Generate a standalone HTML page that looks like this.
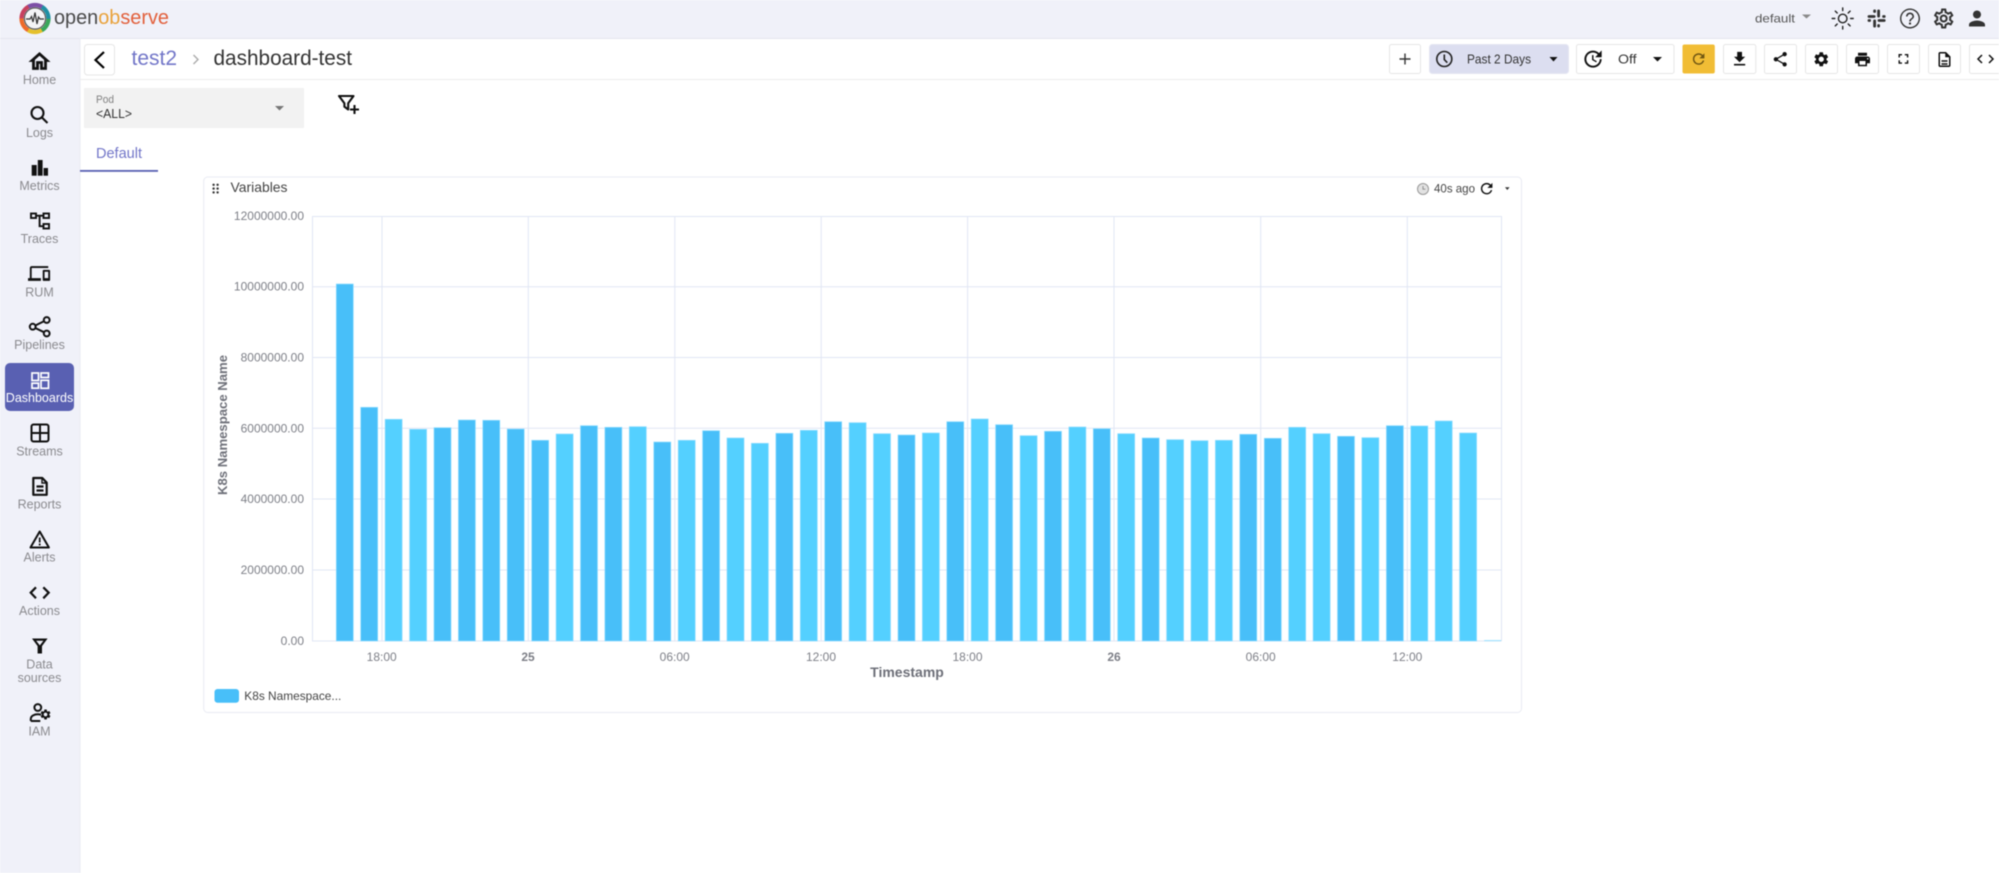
<!DOCTYPE html>
<html lang="en"><head><meta charset="utf-8"><title>dashboard-test</title>
<style>
html,body{margin:0;padding:0;background:#fff;width:1999px;height:873px;overflow:hidden}
svg{display:block;filter:blur(.45px)}
text{font-family:"Liberation Sans",sans-serif}
.nav{font-size:12.5px;fill:#8b8b8f;text-anchor:middle}
.y{font-size:12px;fill:#7d7f87;text-anchor:end}
.x{font-size:12px;fill:#7d7f87;text-anchor:middle}
.b{fill:#fff;stroke:#e6e6e6;stroke-width:1}
.g{stroke:#e1e6f4;stroke-width:1;fill:none}
.ic{fill:none;stroke:#111;stroke-width:2}
</style></head><body>
<svg width="1999" height="873" viewBox="0 0 1999 873" xmlns="http://www.w3.org/2000/svg">
<defs>
<path id="refresh" d="M17.65 6.35A7.958 7.958 0 0 0 12 4c-4.42 0-7.99 3.58-7.99 8s3.57 8 7.99 8c3.73 0 6.84-2.55 7.73-6h-2.08A5.99 5.99 0 0 1 12 18c-3.31 0-6-2.69-6-6s2.69-6 6-6c1.66 0 3.14.69 4.22 1.78L13 11h7V4l-2.35 2.35z"/>
</defs>
<rect width="1999" height="873" fill="#fff"/>
<!-- top bar + sidebar -->
<rect width="1999" height="38" fill="#f0f1f9"/>
<rect y="38" width="80" height="835" fill="#f0f1f9"/>
<line x1="0" y1="38.5" x2="1999" y2="38.5" stroke="#e4e5ee"/>
<line x1="80" y1="38" x2="80" y2="873" stroke="#eaebf3"/>
<!-- logo -->
<g fill="none" stroke-width="4.2">
<circle cx="35" cy="18.5" r="13.5" stroke="#3aa65a" stroke-dasharray="14.4 70.4" stroke-dashoffset="0"/>
<circle cx="35" cy="18.5" r="13.5" stroke="#e5c02b" stroke-dasharray="14.4 70.4" stroke-dashoffset="-14.1"/>
<circle cx="35" cy="18.5" r="13.5" stroke="#ee6a2a" stroke-dasharray="14.4 70.4" stroke-dashoffset="-28.3"/>
<circle cx="35" cy="18.5" r="13.5" stroke="#c7415f" stroke-dasharray="14.4 70.4" stroke-dashoffset="-42.4"/>
<circle cx="35" cy="18.5" r="13.5" stroke="#7d4fa6" stroke-dasharray="14.4 70.4" stroke-dashoffset="-56.5"/>
<circle cx="35" cy="18.5" r="13.5" stroke="#1f8fa3" stroke-dasharray="14.4 70.4" stroke-dashoffset="-70.7"/>
</g>
<circle cx="35" cy="18.5" r="10.6" fill="#f4f4f6" stroke="#555" stroke-width="1.2"/>
<polyline points="26,19 30,19 31.5,16.5 33,22 35,12.5 37,24 38.5,17 40,19 44,19" fill="none" stroke="#333" stroke-width="1.2"/>
<text x="54" y="24" font-size="20" textLength="115" lengthAdjust="spacingAndGlyphs"><tspan fill="#4a4a4a">open</tspan><tspan fill="#e9a23b">ob</tspan><tspan fill="#e2603c">serve</tspan></text>
<!-- top right -->
<text x="1755" y="22.5" font-size="12" fill="#555" textLength="40" lengthAdjust="spacingAndGlyphs">default</text>
<polygon points="1802,14.5 1811,14.5 1806.5,18.5" fill="#8a8a8a"/>
<g transform="translate(1842.7,18.5)" fill="none" stroke="#222" stroke-width="1.4">
<circle r="4.3"/>
<path d="M0-10.5v2.6M0 7.9v2.6M-10.5 0h2.6M7.9 0h2.6M-7.4-7.4l1.9 1.9M5.5 5.5l1.9 1.9M-7.4 7.4l1.9-1.9M5.5-5.5l1.9-1.9" stroke-linecap="round"/>
</g>
<g transform="translate(1876.6,18.5)" fill="#333">
<rect x="-9" y="-3.4" width="8" height="2.8" rx="1.4"/><rect x="-3.4" y="-9" width="2.8" height="3.4" rx="1.2"/>
<rect x=".6" y="-9" width="2.8" height="8" rx="1.4"/><rect x="5.6" y="-3.4" width="3.4" height="2.8" rx="1.2"/>
<rect x="1" y=".6" width="8" height="2.8" rx="1.4"/><rect x=".6" y="5.6" width="2.8" height="3.4" rx="1.2"/>
<rect x="-3.4" y="1" width="2.8" height="8" rx="1.4"/><rect x="-9" y=".6" width="3.4" height="2.8" rx="1.2"/>
</g>
<path transform="translate(1898,6.5)" fill="#333" d="M11 18h2v-2h-2v2zm1-16C6.48 2 2 6.48 2 12s4.48 10 10 10 10-4.48 10-10S17.52 2 12 2zm0 18.6c-4.75 0-8.6-3.85-8.6-8.6S7.25 3.4 12 3.4s8.6 3.85 8.6 8.6-3.85 8.6-8.6 8.6zM12 6c-2.21 0-4 1.79-4 4h1.6c0-1.3 1.1-2.4 2.4-2.4s2.4 1.1 2.4 2.4c0 2-3.2 1.9-3.2 5h1.6c0-2.25 3.2-2.5 3.2-5 0-2.21-1.79-4-4-4z"/>
<path transform="translate(1931.7,6.5)" fill="#333" d="M19.43 12.98c.04-.32.07-.64.07-.98 0-.34-.03-.66-.07-.98l2.11-1.65c.19-.15.24-.42.12-.64l-2-3.46c-.09-.16-.26-.25-.44-.25-.06 0-.12.01-.17.03l-2.49 1c-.52-.4-1.08-.73-1.69-.98l-.38-2.65C14.46 2.18 14.25 2 14 2h-4c-.25 0-.46.18-.49.42l-.38 2.65c-.61.25-1.17.59-1.69.98l-2.49-1c-.06-.02-.12-.03-.18-.03-.17 0-.34.09-.43.25l-2 3.46c-.13.22-.07.49.12.64l2.11 1.65c-.04.32-.07.65-.07.98 0 .33.03.66.07.98l-2.11 1.65c-.19.15-.24.42-.12.64l2 3.46c.09.16.26.25.44.25.06 0 .12-.01.17-.03l2.49-1c.52.4 1.08.73 1.69.98l.38 2.65c.03.24.24.42.49.42h4c.25 0 .46-.18.49-.42l.38-2.65c.61-.25 1.17-.59 1.69-.98l2.49 1c.06.02.12.03.18.03.17 0 .34-.09.43-.25l2-3.46c.12-.22.07-.49-.12-.64l-2.11-1.65zm-1.98-1.71c.04.31.05.52.05.73 0 .21-.02.43-.05.73l-.14 1.13.89.7 1.08.84-.7 1.21-1.27-.51-1.04-.42-.9.68c-.43.32-.84.56-1.25.73l-1.06.43-.16 1.13-.2 1.35h-1.4l-.19-1.35-.16-1.13-1.06-.43c-.43-.18-.83-.41-1.23-.71l-.91-.7-1.06.43-1.27.51-.7-1.21 1.08-.84.89-.7-.14-1.13c-.03-.31-.05-.54-.05-.74s.02-.43.05-.73l.14-1.13-.89-.7-1.08-.84.7-1.21 1.27.51 1.04.42.9-.68c.43-.32.84-.56 1.25-.73l1.06-.43.16-1.13.2-1.35h1.39l.19 1.35.16 1.13 1.06.43c.43.18.83.41 1.23.71l.91.7 1.06-.43 1.27-.51.7 1.21-1.07.85-.89.7.14 1.13zM12 8c-2.21 0-4 1.79-4 4s1.79 4 4 4 4-1.79 4-4-1.79-4-4-4zm0 6c-1.1 0-2-.9-2-2s.9-2 2-2 2 .9 2 2-.9 2-2 2z"/>
<path transform="translate(1965,6.5)" fill="#333" d="M12 12c2.21 0 4-1.79 4-4s-1.79-4-4-4-4 1.79-4 4 1.79 4 4 4zm0 2c-2.67 0-8 1.34-8 4v2h16v-2c0-2.66-5.33-4-8-4z"/>
<!-- sidebar icons -->
<path transform="translate(27.5,49.5)" fill="#111" stroke="#111" stroke-width=".8" d="M12 3L2 12h3v8h6v-6h2v6h6v-8h3L12 3zm5 15h-2v-6H9v6H7v-7.81l5-4.5 5 4.5V18z"/>
<text class="nav" x="39.5" y="84">Home</text>
<g fill="none" stroke="#111" stroke-width="2.1"><circle cx="37.5" cy="113" r="6"/><line x1="41.8" y1="117.4" x2="47.5" y2="123"/></g>
<text class="nav" x="39.5" y="137">Logs</text>
<g fill="#111"><rect x="31.7" y="165" width="5" height="10.7"/><rect x="37.8" y="160" width="4.8" height="15.7"/><rect x="43.6" y="168" width="4.4" height="7.7"/></g>
<text class="nav" x="39.5" y="190">Metrics</text>
<g fill="none" stroke="#111" stroke-width="1.9"><rect x="31" y="213.5" width="5" height="4.5"/><rect x="43.5" y="213.5" width="5.5" height="4.5"/><rect x="43.5" y="224" width="5.5" height="4.5"/><path d="M36 215.7h7.5M39.6 215.7v10.5h3.9"/></g>
<text class="nav" x="39.5" y="243">Traces</text>
<path transform="translate(28,262.5) scale(.92)" fill="#111" d="M4 6h18V4H4c-1.1 0-2 .9-2 2v11H0v3h14v-3H4V6zm19 2h-6c-.55 0-1 .45-1 1v10c0 .55.45 1 1 1h6c.55 0 1-.45 1-1V9c0-.55-.45-1-1-1zm-1 9h-4v-7h4v7z"/>
<text class="nav" x="39.5" y="296.5">RUM</text>
<g fill="none" stroke="#111" stroke-width="2"><circle cx="32.7" cy="326.7" r="2.9"/><circle cx="46.7" cy="320" r="2.9"/><circle cx="46.7" cy="333.5" r="2.9"/><path d="M35.3 325.5l8.9-4.4M35.3 328l8.9 4.3"/></g>
<text class="nav" x="39.5" y="349">Pipelines</text>
<rect x="5" y="363" width="69" height="48" rx="5" fill="#5960b2"/>
<g fill="none" stroke="#fff" stroke-width="1.7"><rect x="32" y="373" width="6.5" height="7.5"/><rect x="41" y="373" width="7.5" height="4.5"/><rect x="32" y="383.2" width="6.5" height="5"/><rect x="41" y="380.3" width="7.5" height="8"/></g>
<text class="nav" x="39.5" y="402" style="fill:#fff" font-size="12.5">Dashboards</text>
<g fill="none" stroke="#111" stroke-width="2"><rect x="31.5" y="424.5" width="17" height="17" rx="2"/><path d="M40 424.5v17M31.5 433h17"/></g>
<text class="nav" x="39.5" y="455.5">Streams</text>
<g fill="none" stroke="#111" stroke-width="2.2"><path d="M33.3 478h9l4.4 4.6v12.2H33.3z" stroke-linejoin="round"/><path d="M36.5 486.5h7M36.5 490.5h7"/><path d="M42 478v5h4.7" stroke-width="1.4"/></g>
<text class="nav" x="39.5" y="508.5">Reports</text>
<g fill="none" stroke="#111" stroke-width="2"><path d="M39.7 531.5L30.5 547.5h18.4z" stroke-linejoin="round"/><path d="M39.7 537.5v5M39.7 543.5v2" stroke-width="1.7"/></g>
<text class="nav" x="39.5" y="561.5">Alerts</text>
<path d="M36 587.3l-5.3 5.4 5.3 5.6M43.3 587.3l5.4 5.4-5.4 5.6" fill="none" stroke="#111" stroke-width="2.2"/>
<text class="nav" x="39.5" y="615">Actions</text>
<path d="M32 638.5h15.6l-5.6 7.6v7.4h-4.4v-7.4z" fill="#111"/><path d="M36.2 640.8l3.6 4.6 3.6-4.6z" fill="#f0f1f9"/>
<text class="nav" x="39.5" y="668.5">Data</text>
<text class="nav" x="39.5" y="682">sources</text>
<g fill="none" stroke="#111" stroke-width="2"><circle cx="37.8" cy="707.5" r="3.4"/><path d="M30.8 721v-2c0-3.3 4-4.7 7-4.7 1.2 0 2.2.2 3.2.5M30.8 721h9.5"/></g>
<path transform="translate(39.3,708.3) scale(.52)" fill="#111" d="M19.14 12.94c.04-.3.06-.61.06-.94 0-.32-.02-.64-.07-.94l2.03-1.58c.18-.14.23-.41.12-.61l-1.92-3.32c-.12-.22-.37-.29-.59-.22l-2.39.96c-.5-.38-1.03-.7-1.62-.94l-.36-2.54c-.04-.24-.24-.41-.48-.41h-3.84c-.24 0-.43.17-.47.41l-.36 2.54c-.59.24-1.13.57-1.62.94l-2.39-.96c-.22-.08-.47 0-.59.22L2.74 8.87c-.12.21-.08.47.12.61l2.03 1.58c-.05.3-.09.63-.09.94s.02.64.07.94l-2.03 1.58c-.18.14-.23.41-.12.61l1.92 3.32c.12.22.37.29.59.22l2.39-.96c.5.38 1.03.7 1.62.94l.36 2.54c.05.24.24.41.48.41h3.84c.24 0 .44-.17.47-.41l.36-2.54c.59-.24 1.13-.56 1.62-.94l2.39.96c.22.08.47 0 .59-.22l1.92-3.32c.12-.22.07-.47-.12-.61l-2.01-1.58zM12 15.6c-1.98 0-3.6-1.62-3.6-3.6s1.62-3.6 3.6-3.6 3.6 1.62 3.6 3.6-1.62 3.6-3.6 3.6z"/>
<text class="nav" x="39.5" y="735.5">IAM</text>
<!-- header row -->
<line x1="80" y1="79.5" x2="1999" y2="79.5" stroke="#ececec"/>
<rect class="b" x="84.5" y="44.5" width="30" height="30.5" rx="3"/>
<path d="M104 52l-8.5 8 8.5 8" fill="none" stroke="#000" stroke-width="2.2"/>
<text x="131.5" y="65" font-size="21" fill="#7276c8" textLength="45.5" lengthAdjust="spacingAndGlyphs">test2</text>
<path d="M193.5 55l4.5 4.5-4.5 4.5" fill="none" stroke="#aaa" stroke-width="1.4"/>
<text x="213.5" y="65" font-size="21" fill="#333" textLength="138.5" lengthAdjust="spacingAndGlyphs">dashboard-test</text>
<!-- toolbar -->
<g>
<rect class="b" x="1389.5" y="44.5" width="31" height="29" rx="2"/>
<path d="M1405 53.5v11M1399.5 59h11" stroke="#333" stroke-width="1.4"/>
<rect x="1429.5" y="44.5" width="139" height="29" rx="3" fill="#dcdef0" stroke="#e4e5f2"/>
<g fill="none" stroke="#222" stroke-width="1.6"><circle cx="1444.3" cy="59" r="7.5"/><path d="M1444.3 54.5V59.5l3 3.2"/></g>
<text x="1467" y="63.5" font-size="12.5" fill="#333" textLength="64" lengthAdjust="spacingAndGlyphs">Past 2 Days</text>
<polygon points="1549.5,57 1557.5,57 1553.5,61.5" fill="#111"/>
<rect class="b" x="1576.5" y="44.5" width="97.5" height="29" rx="2"/>
<path transform="translate(1581.5,47.5) scale(.96)" fill="#111" d="M21 10.12h-6.78l2.74-2.82c-2.73-2.7-7.15-2.8-9.88-.1-2.73 2.71-2.73 7.08 0 9.79s7.15 2.71 9.88 0C18.32 15.65 19 14.08 19 12.1h2c0 1.98-.88 4.55-2.64 6.29-3.51 3.48-9.21 3.48-12.72 0-3.5-3.47-3.53-9.11-.02-12.58s9.14-3.47 12.65 0L21 3v7.12zM12.5 8v4.25l3.5 2.08-.72 1.21L11 13V8h1.5z"/>
<text x="1618" y="63.5" font-size="13" fill="#333" textLength="18.6" lengthAdjust="spacingAndGlyphs">Off</text>
<polygon points="1653,57 1662,57 1657.5,61.5" fill="#111"/>
<rect x="1682.5" y="44.5" width="32.3" height="29" rx="2" fill="#f1bd35"/>
<use href="#refresh" transform="translate(1690,50.4) scale(.72)" fill="#6e5512"/>
<rect class="b" x="1723.5" y="44.5" width="32.3" height="29" rx="2"/>
<path transform="translate(1730,49.5) scale(.8)" fill="#111" d="M19 9h-4V3H9v6H5l7 7 7-7zM5 18v2h14v-2H5z"/>
<rect class="b" x="1764.5" y="44.5" width="32" height="29" rx="2"/>
<path transform="translate(1771.5,50.5) scale(.73)" fill="#111" d="M18 16.08c-.76 0-1.44.3-1.96.77L8.91 12.7c.05-.23.09-.46.09-.7s-.04-.47-.09-.7l7.05-4.11c.54.5 1.25.81 2.04.81 1.66 0 3-1.34 3-3s-1.34-3-3-3-3 1.34-3 3c0 .24.04.47.09.7L8.04 9.81C7.5 9.31 6.79 9 6 9c-1.66 0-3 1.34-3 3s1.34 3 3 3c.79 0 1.5-.31 2.04-.81l7.12 4.16c-.05.21-.08.43-.08.65 0 1.61 1.31 2.92 2.92 2.92s2.92-1.31 2.92-2.92-1.31-2.92-2.92-2.92z"/>
<rect class="b" x="1805.5" y="44.5" width="32" height="29" rx="2"/>
<path transform="translate(1812.5,50.5) scale(.73)" fill="#111" d="M19.14 12.94c.04-.3.06-.61.06-.94 0-.32-.02-.64-.07-.94l2.03-1.58c.18-.14.23-.41.12-.61l-1.92-3.32c-.12-.22-.37-.29-.59-.22l-2.39.96c-.5-.38-1.03-.7-1.62-.94l-.36-2.54c-.04-.24-.24-.41-.48-.41h-3.84c-.24 0-.43.17-.47.41l-.36 2.54c-.59.24-1.13.57-1.62.94l-2.39-.96c-.22-.08-.47 0-.59.22L2.74 8.87c-.12.21-.08.47.12.61l2.03 1.58c-.05.3-.09.63-.09.94s.02.64.07.94l-2.03 1.58c-.18.14-.23.41-.12.61l1.92 3.32c.12.22.37.29.59.22l2.39-.96c.5.38 1.03.7 1.62.94l.36 2.54c.05.24.24.41.48.41h3.84c.24 0 .44-.17.47-.41l.36-2.54c.59-.24 1.13-.56 1.62-.94l2.39.96c.22.08.47 0 .59-.22l1.92-3.32c.12-.22.07-.47-.12-.61l-2.01-1.58zM12 15.6c-1.98 0-3.6-1.62-3.6-3.6s1.62-3.6 3.6-3.6 3.6 1.62 3.6 3.6-1.62 3.6-3.6 3.6z"/>
<rect class="b" x="1846.5" y="44.5" width="32" height="29" rx="2"/>
<path transform="translate(1853.5,50.5) scale(.75)" fill="#111" d="M19 8H5c-1.66 0-3 1.34-3 3v6h4v4h12v-4h4v-6c0-1.66-1.34-3-3-3zm-3 11H8v-5h8v5zm3-7c-.55 0-1-.45-1-1s.45-1 1-1 1 .45 1 1-.45 1-1 1zm-1-9H6v4h12V3z"/>
<rect class="b" x="1887.5" y="44.5" width="32" height="29" rx="2"/>
<path transform="translate(1895,50.5) scale(.7)" fill="#111" d="M7 14H5v5h5v-2H7v-3zm-2-4h2V7h3V5H5v5zm12 7h-3v2h5v-5h-2v3zM14 5v2h3v3h2V5h-5z"/>
<rect class="b" x="1928.5" y="44.5" width="32" height="29" rx="2"/>
<path transform="translate(1935.5,50.5) scale(.75)" fill="#111" d="M14 2H6c-1.1 0-2 .9-2 2v16c0 1.1.89 2 1.99 2H18c1.1 0 2-.9 2-2V8l-6-6zm4 18H6V4h7v5h5v11zM8 13h8v2H8zm0 4h8v2H8z"/>
<rect class="b" x="1969.5" y="44.5" width="32" height="29" rx="2"/>
<path d="M1982 55l-4 4 4 4M1989 55l4 4-4 4" fill="none" stroke="#111" stroke-width="1.5"/>
</g>
<!-- variable dropdown -->
<rect x="84" y="88" width="220" height="40" fill="#f2f2f2"/>
<text x="96" y="103" font-size="11" fill="#808080" textLength="18" lengthAdjust="spacingAndGlyphs">Pod</text>
<text x="96" y="118" font-size="13" fill="#333" textLength="36" lengthAdjust="spacingAndGlyphs">&lt;ALL&gt;</text>
<polygon points="275,106 284,106 279.5,110.5" fill="#777"/>
<g fill="none" stroke="#111" stroke-width="2.1"><path d="M339 96h14.5l-5.3 7.2v6.3l-3.8-2.8v-3.5z" stroke-linejoin="round"/><path d="M354.5 105v9M350 109.5h9" stroke-width="2.1"/></g>
<!-- tabs -->
<text x="96" y="158" font-size="15" fill="#7276c8" textLength="46" lengthAdjust="spacingAndGlyphs">Default</text>
<rect x="80" y="170" width="78" height="1.8" fill="#5960b2"/>
<!-- panel -->
<rect x="203.7" y="177" width="1317.8" height="535.5" rx="4" fill="#fff" stroke="#e9ebf3"/>
<g fill="#333"><circle cx="213.6" cy="184.8" r="1.2"/><circle cx="217.6" cy="184.8" r="1.2"/><circle cx="213.6" cy="188.6" r="1.2"/><circle cx="217.6" cy="188.6" r="1.2"/><circle cx="213.6" cy="192.4" r="1.2"/><circle cx="217.6" cy="192.4" r="1.2"/></g>
<text x="230.5" y="192" font-size="14" fill="#444" textLength="57" lengthAdjust="spacingAndGlyphs">Variables</text>
<circle cx="1423" cy="189" r="5.5" fill="#e2e2e2" stroke="#999"/><path d="M1423 186v3.2h2.4" fill="none" stroke="#888" stroke-width=".9"/>
<text x="1434" y="192.5" font-size="12" fill="#444" textLength="41" lengthAdjust="spacingAndGlyphs">40s ago</text>
<use href="#refresh" transform="translate(1478,180) scale(.72)" fill="#111"/>
<polygon points="1505,187.3 1509.6,187.3 1507.3,190" fill="#333"/>
<!-- grid -->
<g class="g">
<path d="M312 216.5H1501.5M312 286.8H1501.5M312 357.5H1501.5M312 428.3H1501.5M312 499H1501.5M312 570H1501.5M312 641H1501.5"/>
<path d="M312.5 216V641M382 216V641M528.3 216V641M674.8 216V641M821.2 216V641M967.6 216V641M1114 216V641M1260.7 216V641M1407.3 216V641M1501.5 216V641"/>
</g>
<!-- bars -->
<g stroke="#90dcff" stroke-width=".7">
<g fill="#48bff9">
<rect x="336.3" y="284" width="17" height="357"/>
<rect x="360.7" y="407.3" width="17" height="233.7"/>
<rect x="434" y="427.7" width="17" height="213.3"/>
<rect x="458.4" y="420" width="17" height="221"/>
<rect x="482.8" y="420.3" width="17" height="220.7"/>
<rect x="507.2" y="429" width="17" height="212"/>
<rect x="531.7" y="440.3" width="17" height="200.7"/>
<rect x="580.5" y="425.7" width="17" height="215.3"/>
<rect x="604.9" y="427.3" width="17" height="213.7"/>
<rect x="653.8" y="442" width="17" height="199"/>
<rect x="702.6" y="430.7" width="17" height="210.3"/>
<rect x="775.9" y="433.3" width="17" height="207.7"/>
<rect x="824.7" y="421.7" width="17" height="219.3"/>
<rect x="898" y="435" width="17" height="206"/>
<rect x="946.8" y="421.7" width="17" height="219.3"/>
<rect x="995.6" y="424.7" width="17" height="216.3"/>
<rect x="1044.5" y="431.3" width="17" height="209.7"/>
<rect x="1093.3" y="428.7" width="17" height="212.3"/>
<rect x="1142.2" y="438" width="17" height="203"/>
<rect x="1239.8" y="434.3" width="17" height="206.7"/>
<rect x="1264.3" y="438.3" width="17" height="202.7"/>
<rect x="1337.5" y="436.3" width="17" height="204.7"/>
<rect x="1386.4" y="425.7" width="17" height="215.3"/>
</g>
<g fill="#54d0ff">
<rect x="385.1" y="419.3" width="17" height="221.7"/>
<rect x="409.6" y="429.3" width="17" height="211.7"/>
<rect x="556.1" y="434" width="17" height="207"/>
<rect x="629.3" y="426.7" width="17" height="214.3"/>
<rect x="678.2" y="440.3" width="17" height="200.7"/>
<rect x="727" y="438" width="17" height="203"/>
<rect x="751.4" y="443.3" width="17" height="197.7"/>
<rect x="800.3" y="430.3" width="17" height="210.7"/>
<rect x="849.1" y="422.7" width="17" height="218.3"/>
<rect x="873.5" y="433.7" width="17" height="207.3"/>
<rect x="922.4" y="433" width="17" height="208"/>
<rect x="971.2" y="419" width="17" height="222"/>
<rect x="1020.1" y="435.7" width="17" height="205.3"/>
<rect x="1068.9" y="427" width="17" height="214"/>
<rect x="1117.7" y="433.7" width="17" height="207.3"/>
<rect x="1166.6" y="439.7" width="17" height="201.3"/>
<rect x="1191" y="440.7" width="17" height="200.3"/>
<rect x="1215.4" y="440.3" width="17" height="200.7"/>
<rect x="1288.7" y="427.3" width="17" height="213.7"/>
<rect x="1313.1" y="433.7" width="17" height="207.3"/>
<rect x="1361.9" y="437.7" width="17" height="203.3"/>
<rect x="1410.8" y="426" width="17" height="215"/>
<rect x="1435.2" y="421" width="17" height="220"/>
<rect x="1459.6" y="433" width="17" height="208"/>
</g>
</g>
<rect x="1484.2" y="640" width="17" height="1.2" fill="#a6e4ff"/>
<!-- y axis labels -->
<text class="y" x="304" y="220">12000000.00</text>
<text class="y" x="304" y="290.5">10000000.00</text>
<text class="y" x="304" y="361.5">8000000.00</text>
<text class="y" x="304" y="432.5">6000000.00</text>
<text class="y" x="304" y="503">4000000.00</text>
<text class="y" x="304" y="574">2000000.00</text>
<text class="y" x="304" y="645">0.00</text>
<!-- x axis labels -->
<text class="x" x="381.7" y="661">18:00</text>
<text class="x" x="528" y="661" font-weight="bold">25</text>
<text class="x" x="674.7" y="661">06:00</text>
<text class="x" x="821" y="661">12:00</text>
<text class="x" x="967.5" y="661">18:00</text>
<text class="x" x="1114" y="661" font-weight="bold">26</text>
<text class="x" x="1260.7" y="661">06:00</text>
<text class="x" x="1407.3" y="661">12:00</text>
<text x="907" y="677" font-size="14" font-weight="bold" fill="#6e7079" text-anchor="middle">Timestamp</text>
<text transform="translate(227,425) rotate(-90)" font-size="13" font-weight="bold" fill="#6e7079" text-anchor="middle" textLength="140" lengthAdjust="spacingAndGlyphs">K8s Namespace Name</text>
<!-- legend -->
<rect x="214.5" y="689" width="24.5" height="13.7" rx="3" fill="#48bff9"/>
<text x="244.3" y="700" font-size="12" fill="#444" textLength="97" lengthAdjust="spacingAndGlyphs">K8s Namespace...</text>
</svg>
</body></html>
